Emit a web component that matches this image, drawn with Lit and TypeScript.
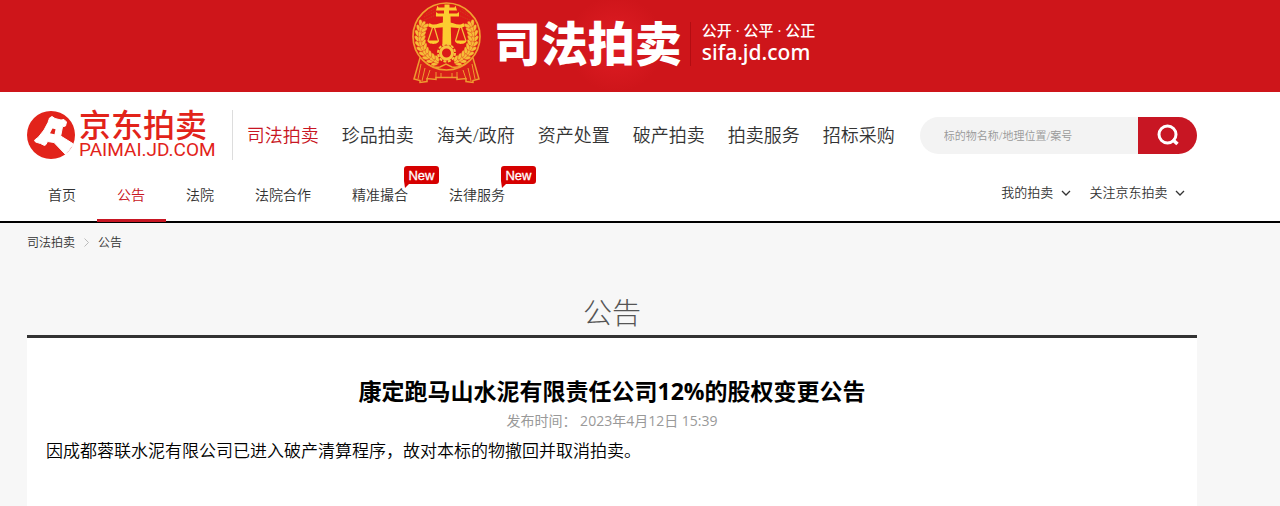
import { LitElement, html, css, svg } from "lit";
import { customElement } from "lit/decorators.js";

const leaves = (side: number) =>
  [0, 1, 2, 3, 4, 5, 6, 7, 8, 9].map((i) => {
    const deg = 66 - i * 10.5;
    const a = (deg * Math.PI) / 180;
    const at = (r: number, turn: number) => {
      const x = 34.5 + side * Math.cos(a) * r;
      const y = 35 + Math.sin(a) * r;
      return svg`<ellipse cx=${x} cy=${y} rx="3.500" ry="1.8" transform="rotate(${side * (deg - 90 + turn)} ${x} ${y})"></ellipse>`;
    };
    return svg`${at(29.5, 35)}${at(26.5, 0)}${at(23.5, -35)}`;
  });

const emblem = html`
  <svg class="emblem" viewBox="0 0 69 82" role="img" aria-label="法徽">
    <g fill="#d8201a" stroke="#ee9a30" stroke-width="1.5">
      <path d="M8 56L2 77l6 1.500v2l7-1v-3l9 1v-2h21v2l9-1v3l7 1v-2l6-1.500-6-21z"></path>
      <path d="M9 62l-3 15M13 66l-3 13M18 68l-3 9M24 70v6M29 71v5M40 71v5M45 70v6M51 68l3 9M56 66l3 13M60 62l3 15" fill="none" stroke-width="1"></path>
    </g>
    <circle cx="34.5" cy="34.500" r="33.500" fill="#dc1a18" stroke="#f0a030" stroke-width="1.700"></circle>
    <g fill="none" stroke="#c8501c" stroke-width="0.800" stroke-dasharray="1 1">
      <path d="M12 15L24 9M10 19l14-6M48 9l10 6M46 13l14 6M14 12l8-5M50 7l6 5"></path>
    </g>
    <g fill="#f6be38" stroke="#dc1a18" stroke-width="0.300">${leaves(1)}${leaves(-1)}</g>
    <g fill="#fccc30">
      <path d="M32.500 2.500h5v3h5l1-2 1.500 5h-8v3h8l2-1.500v4.500H24v-4.500l2 1.500h6V8.500h-8l1.500-5 1 2h6z"></path>
      <path d="M31 13h7.500l.8 32h-9z"></path>
      <path d="M17.500 21c5 4 10-1 17-1s12 5 17 1l1 3.500c-6 3-11 .5-18 .5s-12 2.500-18-.5z"></path>
      <path d="M15.500 38.500h11.500c0 4.500-11.500 4.500-11.500 0zM43 38.500h11.500c0 4.500-11.500 4.500-11.500 0z"></path>
    </g>
    <path d="M21 24l-5 15M22 24l4.500 15M48 24l-4.500 15M49 24l5 15" stroke="#f6c33c" stroke-width="1.200" fill="none"></path>
    <circle cx="34.5" cy="51" r="8.500" fill="#dc1a18" stroke="#f6c33c" stroke-width="2" stroke-dasharray="3 1.450"></circle>
    <circle cx="34.5" cy="51" r="6" fill="#dc1a18" stroke="#f6c33c" stroke-width="3"></circle>
    <path d="M14 61c6 4 9 5 14 4l6-3 6 3c5 1 9 0 14-4" fill="none" stroke="#f0a030" stroke-width="1.500"></path>
  </svg>`;

const gavel = html`
  <svg class="gavel" viewBox="0 0 48 48" aria-hidden="true">
    <circle cx="24" cy="24" r="24" fill="#e2231a"></circle>
    <path
      fill="#fff"
      stroke="#fff"
      stroke-linejoin="round"
      d="M22.500 7l2.500-1.500 3 2 6 1.500 3-.5 2.500 2.500-1 4-3 .8-1.800 9.200 12.800 8-8 10.500-11.500-12-6.500-1-1.500 3-1.500 1-4-2-5-1.500-1-1.800 4-3.200 5.500-7 4-7.500 1-3z"
    ></path>
    <path fill="#e2231a" d="M25.500 17.500l3 .7-1 5-4.500-.9z"></path>
  </svg>`;

const caret = html`
  <svg class="caret" viewBox="0 0 10 6" aria-hidden="true">
    <path d="M1 1l4 4 4-4" fill="none" stroke="currentColor" stroke-width="1.300"></path>
  </svg>`;

@customElement("app-root")
export class AppRoot extends LitElement {
  static styles = css`
    :host {
      display: block;
      min-height: 100vh;
      background: #f7f7f7;
      color: #333;
      font-family: "Open Sans", "Noto Sans CJK SC", sans-serif;
      font-size: 14px;
      font-weight: 350;
    }
    * { box-sizing: border-box; }
    a { color: inherit; text-decoration: none; }
    h1, h2, p { margin: 0; }
    .banner {
      display: flex;
      justify-content: center;
      height: 92px;
      padding: 2px 53px 0 0;
      background: radial-gradient(circle 48px at 616px 44px, #e01d24, #ce151a);
      color: #fff;
    }
    .emblem { width: 69px; height: 82px; margin-right: 13px; }
    .court { font-size: 47px; line-height: 82px; font-weight: 900; }
    .site {
      align-self: flex-start;
      margin: 20px 0 0 8px;
      padding-left: 11px;
      border-left: 1px solid #b30d12;
      font-weight: 500;
    }
    .motto { font-size: 15px; line-height: 16px; }
    .domain { font-family: "Noto Sans", sans-serif; font-size: 21px; line-height: 28px; }
    .head { background: #fff; border-bottom: 2px solid #000; }
    .wrap { padding: 0 83px 0 27px; }
    .top { display: flex; align-items: center; height: 86px; }
    .brand {
      display: flex;
      align-items: center;
      gap: 4px;
      height: 50px;
      padding-right: 16px;
      border-right: 1px solid #ddd;
      color: #e2231a;
    }
    .gavel { width: 48px; height: 48px; }
    .name { display: block; font-size: 32px; line-height: 30px; font-weight: 500; }
    .host { display: block; font-family: Roboto, sans-serif; font-size: 19px; line-height: 20px; font-weight: 400; }
    .main { display: flex; gap: 23px; margin-left: 14px; font-size: 18px; line-height: 26px; white-space: nowrap; }
    .on { color: #c81623; }
    .search { display: flex; flex: 1; height: 37px; margin-left: 25px; border-radius: 19px; overflow: hidden; }
    .box {
      flex: 1;
      min-width: 0;
      padding: 0 24px;
      border: 0;
      background: #f3f3f3;
      font: inherit;
      font-size: 11px;
    }
    .box::placeholder { color: #999; }
    .go { width: 59px; padding: 0; border: 0; background: #c81623; color: #fff; }
    .lens { width: 22px; height: 22px; vertical-align: middle; }
    .sub { display: flex; justify-content: space-between; height: 43px; white-space: nowrap; }
    .tabs { display: flex; padding-left: 1px; }
    .tab { position: relative; padding: 0 21px 0 20px; line-height: 34px; }
    .tab.on::after {
      content: "";
      position: absolute;
      inset: auto 0 -1px 0;
      height: 3px;
      background: #c81623;
    }
    .new { position: absolute; right: -10px; top: -12px; width: 35px; height: 22px; }
    .mine { display: flex; gap: 19px; padding-right: 12px; font-size: 13px; line-height: 28px; }
    .caret { width: 10px; height: 6px; margin-left: 4px; vertical-align: 1px; }
    .crumbs { display: flex; align-items: center; gap: 9px; height: 38px; font-size: 12px; }
    .sep { width: 5px; height: 9px; }
    .section {
      padding-top: 30px;
      border-bottom: 3px solid #333;
      color: #555;
      font-size: 29px;
      line-height: 44px;
      font-weight: 300;
      text-align: center;
    }
    .paper { min-height: 169px; padding: 35px 19px; background: #fff; color: #000; }
    .title { font-size: 23px; line-height: 36px; font-weight: 700; text-align: center; }
    .time { color: #999; font-size: 14px; line-height: 24px; font-weight: 400; text-align: center; }
    .text { font-size: 17px; line-height: 36px; }
  `;

  private main = ["司法拍卖", "珍品拍卖", "海关/政府", "资产处置", "破产拍卖", "拍卖服务", "招标采购"];
  private tabs = ["首页", "公告", "法院", "法院合作", "精准撮合", "法律服务"];

  render() {
    return html`
      <div class="banner">
        ${emblem}
        <div class="court">司法拍卖</div>
        <div class="site">
          <div class="motto">公开 · 公平 · 公正</div>
          <div class="domain">sifa.jd.com</div>
        </div>
      </div>
      <header class="head">
        <div class="wrap">
          <div class="top">
            <a class="brand" href="#">
              ${gavel}
              <span><span class="name">京东拍卖</span><span class="host">PAIMAI.JD.COM</span></span>
            </a>
            <nav class="main">
              ${this.main.map((t, i) => html`<a class=${i === 0 ? "on" : ""} href="#">${t}</a>`)}
            </nav>
            <form class="search">
              <input class="box" type="text" aria-label="搜索" placeholder="标的物名称/地理位置/案号" />
              <button class="go" type="button" aria-label="搜索">
                <svg class="lens" viewBox="0 0 22 22">
                  <circle cx="10.500" cy="10.500" r="8.500" fill="none" stroke="#fff" stroke-width="3"></circle>
                  <path d="M15.500 15.500l5 4.500" stroke="#fff" stroke-width="3.600"></path>
                </svg>
              </button>
            </form>
          </div>
          <div class="sub">
            <nav class="tabs">
              ${this.tabs.map(
                (t, i) => html`<a class="tab ${i === 1 ? "on" : ""}" href="#">${t}${i > 3
                  ? html`<svg class="new" viewBox="0 0 35 22">
                      <path d="M3 0h29a3 3 0 0 1 3 3v12a3 3 0 0 1-3 3H5l-4 4-1-7V3a3 3 0 0 1 3-3z" fill="#d60000"></path>
                      <text x="17.500" y="13.500" text-anchor="middle" fill="#fff" font-family="Liberation Sans" font-size="13" stroke="#fff" stroke-width="0.300">New</text>
                    </svg>`
                  : ""}</a>`
              )}
            </nav>
            <div class="mine">
              <a href="#">我的拍卖${caret}</a>
              <a href="#">关注京东拍卖${caret}</a>
            </div>
          </div>
        </div>
      </header>
      <main class="wrap">
        <nav class="crumbs">
          <a href="#">司法拍卖</a>
          <svg class="sep" viewBox="0 0 5 9" aria-hidden="true"><path d="M0.500 0.500l4 4-4 4" fill="none" stroke="#bbb"></path></svg>
          <span>公告</span>
        </nav>
        <h2 class="section">公告</h2>
        <article class="paper">
          <h1 class="title">康定跑马山水泥有限责任公司12%的股权变更公告</h1>
          <p class="time">发布时间： 2023年4月12日 15:39</p>
          <p class="text">因成都蓉联水泥有限公司已进入破产清算程序，故对本标的物撤回并取消拍卖。</p>
        </article>
      </main>
    `;
  }
}
